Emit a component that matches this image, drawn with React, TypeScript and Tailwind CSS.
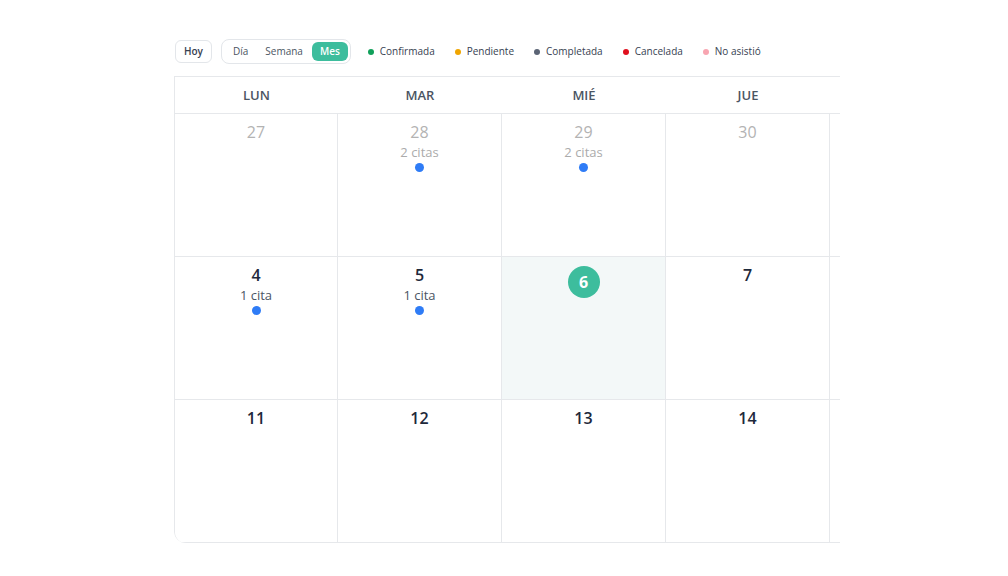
import React from "react";

type Day = { n?: number; muted?: boolean; today?: boolean; citas?: number };

// only four full columns fit; the fifth is cut by the panel edge
const WEEKDAYS = ["LUN", "MAR", "MIÉ", "JUE", ""];

const WEEKS: Day[][] = [
  [{ n: 27, muted: true }, { n: 28, muted: true, citas: 2 }, { n: 29, muted: true, citas: 2 }, { n: 30, muted: true }, {}],
  [{ n: 4, citas: 1 }, { n: 5, citas: 1 }, { n: 6, today: true }, { n: 7 }, {}],
  [{ n: 11 }, { n: 12 }, { n: 13 }, { n: 14 }, {}],
];

const LEGEND = [
  { label: "Confirmada", color: "bg-[#10a05a]" },
  { label: "Pendiente", color: "bg-[#f0a500]" },
  { label: "Completada", color: "bg-[#5b6475]" },
  { label: "Cancelada", color: "bg-[#e0101e]" },
  { label: "No asistió", color: "bg-[#f8a5b1]" },
];

function Cell({ day, last }: { day: Day; last: boolean }) {
  return (
    <div
      className={`flex h-[143px] flex-col items-center border-b border-[#e6e8eb] pt-[8px] ${
        last ? "" : "border-r"
      } ${day.today ? "bg-[#f3f8f8]" : "bg-white"}`}
    >
      {day.today ? (
        <span className="mt-[1px] flex h-[32px] w-[32px] items-center justify-center rounded-full bg-[#3dbd9d] text-[16px] font-bold text-white">
          {day.n}
        </span>
      ) : (
        day.n && (
          <span
            className={`text-[16px] leading-[20px] ${
              day.muted ? "font-normal text-[#b3b3b3]" : "font-semibold text-[#1e293b]"
            }`}
          >
            {day.n}
          </span>
        )
      )}
      {day.citas && (
        <>
          <span className={`text-[13px] leading-[20px] ${day.muted ? "text-[#ababab]" : "text-[#4b5563]"}`}>
            {day.citas} {day.citas === 1 ? "cita" : "citas"}
          </span>
          <span className="mt-[1px] h-[9px] w-[9px] rounded-full bg-[#2f7cf6]" />
        </>
      )}
    </div>
  );
}

export default function App() {
  return (
    <div className="min-h-[576px] w-[1008px] bg-white pt-[39px] pl-[175px] font-['Open_Sans',sans-serif]">
      <div className="flex h-[25px] items-center">
        <button className="h-[23px] rounded-md border border-[#e3e6ea] px-[8px] text-[10px] font-semibold text-[#374151]">
          Hoy
        </button>
        <div className="ml-[9px] flex h-[25px] items-center gap-[1px] rounded-lg border border-[#e3e6ea] pr-[2px] pl-[3px]">
          <span className="px-[8px] text-[10px] text-[#4b5563]">Día</span>
          <span className="px-[8px] text-[10px] text-[#4b5563]">Semana</span>
          <span className="flex h-[19px] items-center rounded-md bg-[#3dbd9d] px-[8px] text-[10px] font-semibold text-white">
            Mes
          </span>
        </div>
        <div className="ml-[17px] flex items-center gap-[20px]">
          {LEGEND.map((l) => (
            <div key={l.label} className="flex items-center gap-[6px]">
              <span className={`h-[6px] w-[6px] rounded-full ${l.color}`} />
              <span className="text-[10px] text-[#374151]">{l.label}</span>
            </div>
          ))}
        </div>
      </div>

      <div className="mt-[12px] -ml-[1px] w-[666px] overflow-hidden rounded-bl-xl border-t border-l border-[#e6e8eb]">
        <div className="grid grid-cols-[163px_repeat(3,164px)_1fr]">
          {WEEKDAYS.map((w, i) => (
            <div
              key={i}
              className="flex h-[37px] items-center justify-center border-b border-[#e6e8eb] pt-[1px] text-[13px] font-semibold text-[#4b5563]"
            >
              {w}
            </div>
          ))}
          {WEEKS.flat().map((d, i) => (
            <Cell key={i} day={d} last={i % 5 === 4} />
          ))}
        </div>
      </div>
    </div>
  );
}
